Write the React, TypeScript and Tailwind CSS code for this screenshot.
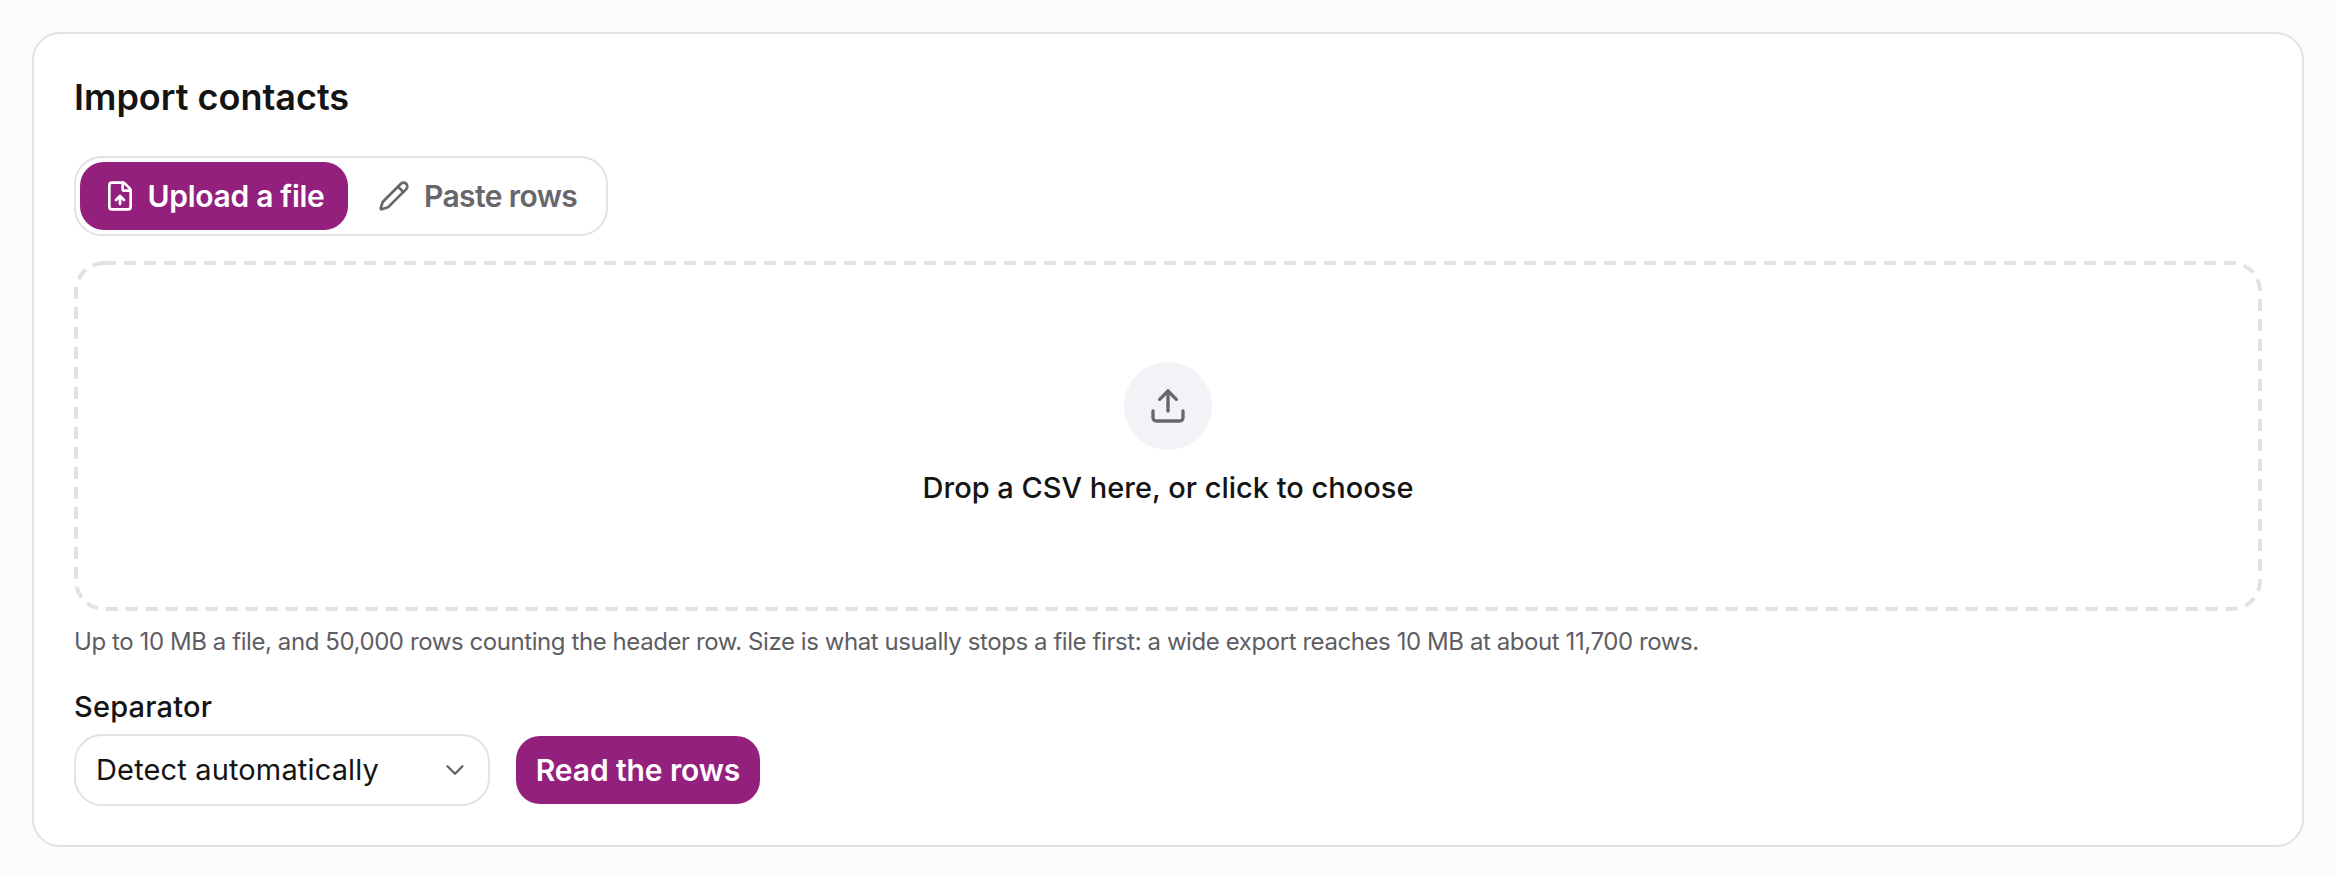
import { ChevronDown, FileUp, Pencil, Upload } from 'lucide-react';

export default function App() {
  return (
    <div className="min-h-[878px] bg-[#fcfcff] p-[32px] font-['Inter',sans-serif] text-[#141414]">
      <section className="h-[815px] w-[2272px] rounded-[28px] border-2 border-[#e2e2e4] bg-white px-10 pt-[37px]">
        <h2 className="text-[36px] leading-[52px] font-semibold">Import contacts</h2>

        <div className="mt-[33px] flex h-20 w-[534px] items-center gap-[10px] rounded-[28px] border-2 border-[#e2e2e4] px-1">
          <button className="flex h-[68px] w-[268px] items-center justify-center gap-3 rounded-3xl bg-[#94207e] text-[30px] font-semibold tracking-[-0.3px] text-white">
            <FileUp size={32} strokeWidth={2} />
            Upload a file
          </button>
          <button className="flex h-[68px] items-center gap-[14px] px-5 text-[30px] font-semibold tracking-[-0.6px] text-[#68666b]">
            <Pencil size={32} strokeWidth={2} />
            Paste rows
          </button>
        </div>

        <div className="relative mt-[25px] flex h-[350px] w-[2188px] flex-col items-center pt-[101px]">
          <svg width="2188" height="350" className="absolute top-0 left-0" fill="none">
            <rect x="2" y="2" width="2184" height="346" rx="28" stroke="#e2e2e4" strokeWidth="4" strokeDasharray="12 8" />
          </svg>
          <div className="flex size-[88px] items-center justify-center rounded-full bg-[#f4f2f6] text-[#68666b]">
            <Upload size={40} strokeWidth={2} />
          </div>
          <p className="mt-[16px] text-[29px] leading-[44px] font-medium">Drop a CSV here, or click to choose</p>
        </div>

        <p className="mt-[15px] text-[24px] leading-[32px] tracking-[-0.42px] text-[#5f5d63]">
          Up to 10 MB a file, and 50,000 rows counting the header row. Size is what usually stops a file first: a wide export reaches 10 MB at about 11,700 rows.
        </p>

        <label className="mt-[30px] block text-[29px] leading-[38px] font-medium tracking-[0.2px]">Separator</label>
        <div className="mt-[8px] flex items-center gap-[26px]">
          <div className="relative h-[72px] w-[416px]">
            <select className="h-full w-full appearance-none rounded-[28px] border-2 border-[#e2e2e4] bg-white pl-[20px] text-[29px] tracking-[0.15px] text-[#141414]">
              <option>Detect automatically</option>
            </select>
            <ChevronDown size={30} strokeWidth={1.75} className="pointer-events-none absolute top-[21px] right-[20px] text-[#5f5d63]" />
          </div>
          <button className="flex h-[68px] w-[244px] items-center justify-center rounded-3xl bg-[#94207e] text-[30px] font-semibold tracking-[-0.1px] text-white">
            Read the rows
          </button>
        </div>
      </section>
    </div>
  );
}
